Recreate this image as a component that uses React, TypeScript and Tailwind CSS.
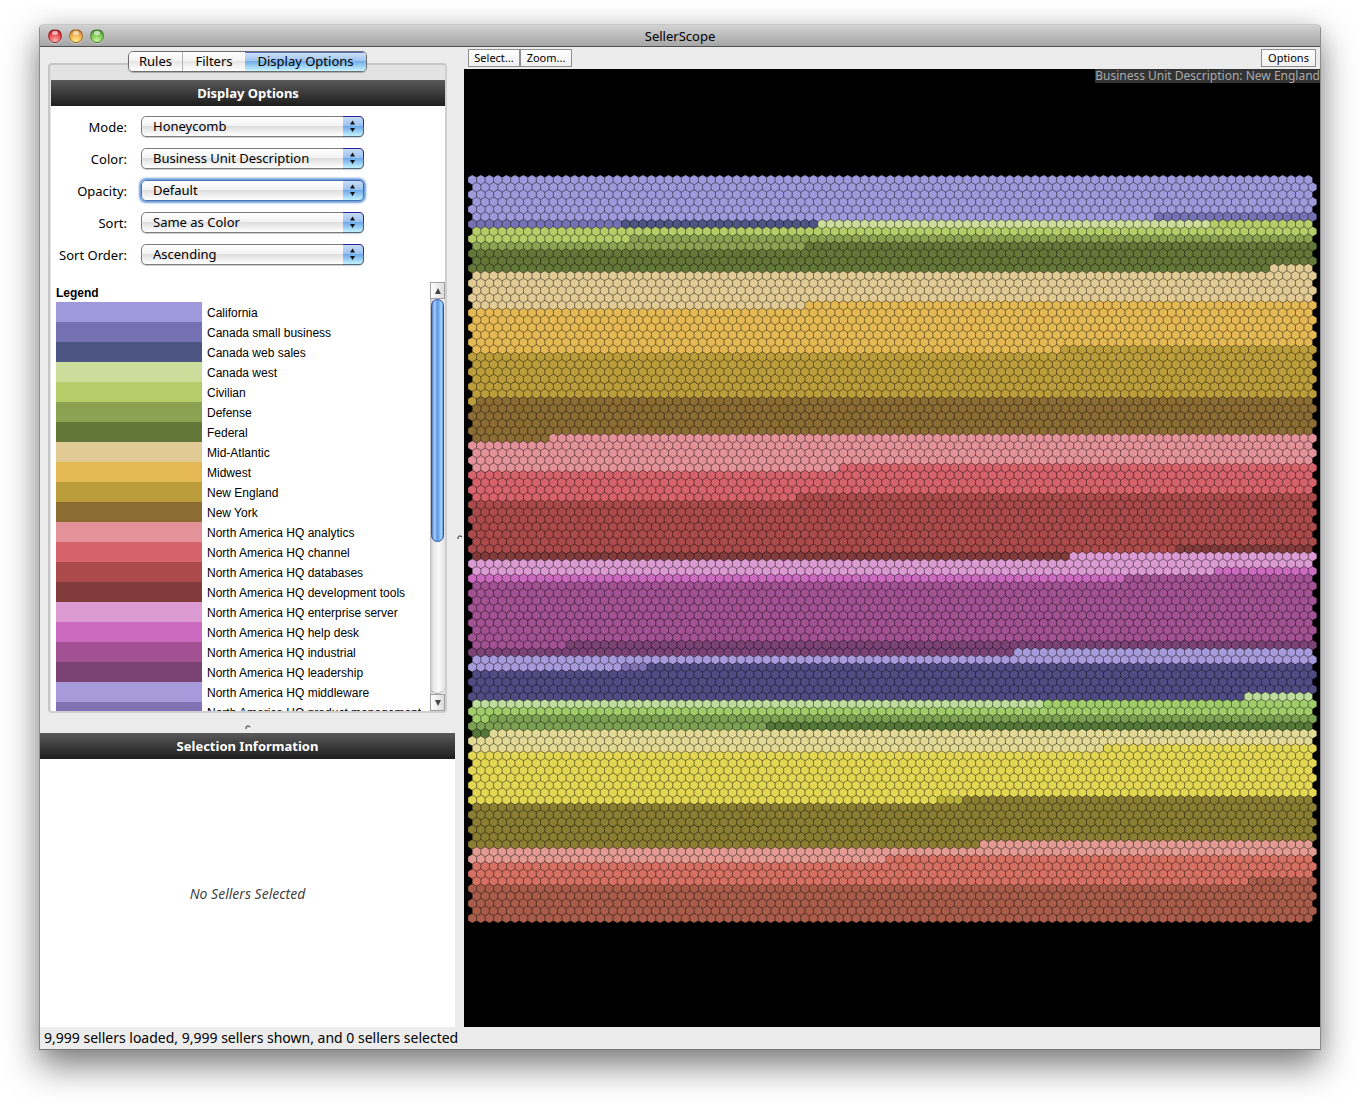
import { ReactNode } from "react";

const legend: [string, string][] = [
  ["California", "#9d99db"],
  ["Canada small business", "#7572b3"],
  ["Canada web sales", "#4d5583"],
  ["Canada west", "#cbdc9b"],
  ["Civilian", "#b4cd69"],
  ["Defense", "#8ba252"],
  ["Federal", "#637838"],
  ["Mid-Atlantic", "#e1ca94"],
  ["Midwest", "#e4b953"],
  ["New England", "#bc9d3b"],
  ["New York", "#8b6c33"],
  ["North America HQ analytics", "#e39299"],
  ["North America HQ channel", "#d6626b"],
  ["North America HQ databases", "#aa4a4a"],
  ["North America HQ development tools", "#823b3b"],
  ["North America HQ enterprise server", "#db9ad2"],
  ["North America HQ help desk", "#cb6abe"],
  ["North America HQ industrial", "#a25193"],
  ["North America HQ leadership", "#7b4274"],
  ["North America HQ middleware", "#a69adb"],
  ["North America HQ product management", "#7f72b3"],
];

/* Each band starts at [row, column] and runs to the start of the next. */
const bands: [number, number, string][] = [
  [0, 0, "#9d99db"],
  [5, 80, "#7572b3"],
  [6, 18, "#4d5583"],
  [6, 41, "#cbdc9b"],
  [6, 87, "#b4cd69"],
  [8, 19, "#8ba252"],
  [9, 39, "#637838"],
  [12, 94, "#e1ca94"],
  [17, 39, "#e4b953"],
  [23, 69, "#bc9d3b"],
  [30, 1, "#8b6c33"],
  [35, 9, "#e39299"],
  [39, 43, "#d6626b"],
  [43, 38, "#aa4a4a"],
  [50, 83, "#823b3b"],
  [51, 70, "#db9ad2"],
  [53, 87, "#cb6abe"],
  [54, 77, "#a25193"],
  [63, 11, "#7b4274"],
  [64, 64, "#a69adb"],
  [66, 18, "#7f72b3"],
  [66, 21, "#504c83"],
  [70, 91, "#bedc9b"],
  [71, 67, "#a0cd69"],
  [73, 2, "#7ba252"],
  [74, 35, "#547838"],
  [75, 2, "#e1d994"],
  [77, 74, "#e2d653"],
  [84, 55, "#bcb33b"],
  [84, 58, "#8b7e33"],
  [90, 60, "#e39a92"],
  [92, 49, "#d67062"],
  [95, 91, "#aa5c4a"],
];

const COLS = 99;
const CELLS = COLS * 101;
const PITCH_X = 8.53;
const PITCH_Y = 7.384;
const HALF = PITCH_X / 2;
const RADIUS = PITCH_X / Math.sqrt(3);

function hexagon(i: number) {
  const row = Math.floor(i / COLS);
  const x = 8.3 + (i % COLS) * PITCH_X + (row % 2) * HALF;
  const y = 110.8 + row * PITCH_Y;
  const s = RADIUS / 2;
  return `M${x.toFixed(2)} ${(y - RADIUS).toFixed(2)}l${HALF} ${s.toFixed(2)}v${RADIUS.toFixed(2)}l${-HALF} ${s.toFixed(2)}l${-HALF} ${(-s).toFixed(2)}v${(-RADIUS).toFixed(2)}z`;
}

const bandPaths = bands.map(([row, col, color], n) => {
  const start = row * COLS + col;
  const next = bands[n + 1];
  const end = next ? next[0] * COLS + next[1] : CELLS;
  let d = "";
  for (let i = start; i < end; i++) d += hexagon(i);
  return { color, d };
});

function Honeycomb() {
  return (
    <svg viewBox="0 0 856 958" className="block h-full w-full" role="img" aria-label="Sellers by business unit">
      {bandPaths.map((b) => (
        <path key={b.color} d={b.d} fill={b.color} stroke="#000" strokeOpacity="0.42" strokeWidth="0.6" />
      ))}
    </svg>
  );
}

function TrafficLight({ className, label }: { className: string; label: string }) {
  return (
    <button
      aria-label={label}
      className={`relative size-[14px] rounded-full border border-black/30 shadow-[0_1px_0_rgba(255,255,255,0.5)] ${className}`}
    >
      <span className="absolute top-px left-[3px] h-1 w-1.5 rounded-full bg-white/60" />
    </button>
  );
}

function PanelHeader({ children }: { children: ReactNode }) {
  return (
    <h2 className="h-[26px] shrink-0 bg-linear-to-b from-[#5a5a5a] to-[#1e1e1e] text-center text-[13px] leading-[26px] font-bold text-white">
      {children}
    </h2>
  );
}

function Field({ id, label, value, focused }: { id: string; label: string; value: string; focused?: boolean }) {
  return (
    <div className="flex h-8 items-start gap-3.5">
      <label htmlFor={id} className="w-[76px] text-right leading-[22px] whitespace-nowrap">
        {label}
      </label>
      <div
        className={
          focused
            ? "relative h-[21px] w-[223px] rounded-[5px] shadow-[0_0_2px_2px_#6f9edb]"
            : "relative h-[21px] w-[223px] rounded-[5px] shadow-[0_1px_1px_rgba(0,0,0,0.2)]"
        }
      >
        <select
          id={id}
          className={`block h-full w-full appearance-none rounded-[5px] border bg-[linear-gradient(#fff,#f3f3f3_45%,#dfdfdf_50%,#fff)] pr-6 pb-px pl-[11px] text-[13px] leading-[18px] text-black outline-none ${
            focused ? "border-[#4a76b8]" : "border-[#7c7c7c]"
          }`}
        >
          <option>{value}</option>
        </select>
        <svg
          viewBox="0 0 21 21"
          className="pointer-events-none absolute top-0 right-0 h-[21px] w-[21px]"
          aria-hidden="true"
        >
          <defs>
            <linearGradient id={`${id}-aqua`} x1="0" y1="0" x2="0" y2="1">
              <stop offset="0" stopColor="#c9def6" />
              <stop offset="0.45" stopColor="#9cc3f0" />
              <stop offset="0.5" stopColor="#6ea9e9" />
              <stop offset="1" stopColor="#c8f6ff" />
            </linearGradient>
          </defs>
          <path d="M0 0.5H16Q20.5 0.5 20.5 5V16Q20.5 20.5 16 20.5H0Z" fill={`url(#${id}-aqua)`} />
          <path d="M0 0.5H16Q20.5 0.5 20.5 5V10" fill="none" stroke={focused ? "#3a62b0" : "#26269a"} />
          <path d="M20.5 10V16Q20.5 20.5 16 20.5H0" fill="none" stroke={focused ? "#4a76b8" : "#49677f"} />
          <path d="M7 8.5L9.500 4.500L12 8.500ZM7 12L9.500 16L12 12Z" fill="#111" />
        </svg>
      </div>
    </div>
  );
}

function Grip() {
  return (
    <svg viewBox="0 0 6 5" className="h-[5px] w-[6px]" aria-hidden="true">
      <path d="M1 4Q1 1 3 1Q4.500 1 5 2.500" fill="none" stroke="#6a6a6a" strokeWidth="1.4" />
      <path d="M3 4L5 3" stroke="#fff" />
    </svg>
  );
}

function ScrollBar() {
  const arrow =
    "grid h-[17px] w-full place-items-center border border-[#a0a0a0] bg-linear-to-r from-[#fff] to-[#dcdcdc]";
  return (
    <div className="flex w-[15px] shrink-0 flex-col bg-[linear-gradient(90deg,#bcbcbc,#e6e6e6_20%,#fafafa_60%,#e2e2e2)]">
      <button aria-label="Scroll up" className={arrow}>
        <svg viewBox="0 0 8 6" className="h-1.5 w-2">
          <path d="M1 6L4 0L7 6Z" fill="#444" />
        </svg>
      </button>
      <div className="mx-px h-[243px] rounded-full border border-[#2d4fa8] bg-[linear-gradient(90deg,#4a7cc8,#a9c8ee_20%,#8ab8f0_35%,#5a97e8_50%,#7ab4f2_65%,#a4d8f8_85%,#5f93d8)]" />
      <div className="flex-1 rounded-b-full border-b border-[#aaa]" />
      <button aria-label="Scroll down" className={arrow}>
        <svg viewBox="0 0 8 6" className="h-1.5 w-2">
          <path d="M1 0L4 6L7 0Z" fill="#444" />
        </svg>
      </button>
    </div>
  );
}

const toolButton =
  "h-[18px] border border-[#8e8e8e] bg-linear-to-b from-white to-[#f0f0f0] px-[5px] text-[11px] leading-4 text-black";

export default function App() {
  return (
    <div className="flex h-screen min-h-[800px] bg-white pt-6 pr-[39px] pb-[54px] pl-[39px] font-['Noto_Sans',sans-serif] text-[13px] text-black">
      <main className="flex min-w-0 flex-1 flex-col overflow-hidden rounded-t-[5px] border border-t-[#c8c8c8] border-r-[#8c8c8c] border-b-[#777] border-l-[#8c8c8c] bg-[#ececec] shadow-[0_16px_34px_rgba(0,0,0,0.5),0_0_20px_rgba(0,0,0,0.08)]">
        <header className="flex h-[22px] shrink-0 items-center border-b border-[#515151] bg-linear-to-b from-[#d2d2d2] to-[#a6a6a6] px-2">
          <div className="flex flex-1 gap-[7px]">
            <TrafficLight label="Close" className="bg-[radial-gradient(circle_at_50%_90%,#ffb8b8,#e63c42_60%,#a01a20)]" />
            <TrafficLight label="Minimize" className="bg-[radial-gradient(circle_at_50%_90%,#fff08a,#f0a848_60%,#b0641c)]" />
            <TrafficLight label="Zoom" className="bg-[radial-gradient(circle_at_50%_90%,#c8f59a,#74c04c_60%,#37791f)]" />
          </div>
          <h1 className="text-[13px] leading-5">SellerScope</h1>
          <div className="flex-1" />
        </header>

        <div className="flex min-h-0 flex-1">
          <aside className="flex w-[415px] shrink-0 flex-col">
            <section className="flex min-h-0 flex-1 flex-col px-2 pt-1">
              <div role="tablist" className="relative z-10 flex h-[21px] self-center overflow-hidden rounded-[5px] border border-[#6e6e6e] leading-[19px] shadow-[0_1px_1px_rgba(0,0,0,0.25)]">
                <button role="tab" aria-selected="false" className="w-[54px] border-r border-[#b4b4b4] bg-[linear-gradient(#fff,#f4f4f4_45%,#e6e6e6_50%,#fff)]">
                  Rules
                </button>
                <button role="tab" aria-selected="false" className="w-[62px] bg-[linear-gradient(#fff,#f4f4f4_45%,#e6e6e6_50%,#fff)]">
                  Filters
                </button>
                <button role="tab" aria-selected="true" className="w-[121px] bg-[linear-gradient(#d4e4f7,#9fc5f1_45%,#74ade9_50%,#c8f6ff)] shadow-[inset_0_1px_0_#5c6fc0]">
                  Display Options
                </button>
              </div>

              <div className="-mt-[9px] flex min-h-0 flex-1 flex-col rounded-[4px] border-2 border-[#c6c6c6] border-r-[#cfcfcf] border-b-[#cfcfcf] bg-[#e3e3e3] pt-[15px] pl-px">
                <PanelHeader>Display Options</PanelHeader>
                <div className="flex min-h-0 flex-1 flex-col bg-white">
                  <form className="pt-2.5">
                    <Field id="mode" label="Mode:" value="Honeycomb" />
                    <Field id="color" label="Color:" value="Business Unit Description" />
                    <Field id="opacity" label="Opacity:" value="Default" focused />
                    <Field id="sort" label="Sort:" value="Same as Color" />
                    <Field id="order" label="Sort Order:" value="Ascending" />
                  </form>
                  <div className="mt-1.5 flex min-h-0 flex-1 pl-[5px]">
                    <div className="min-w-0 flex-1 [scrollbar-width:none] overflow-y-auto font-['Liberation_Sans',sans-serif] text-[12px] leading-[22px] whitespace-nowrap">
                      <h3 className="h-5 font-bold">Legend</h3>
                      <ul>
                        {legend.map(([name, color]) => (
                          <li key={name} className="flex h-5 gap-[5px]">
                            <span className="w-[146px] shrink-0" style={{ backgroundColor: color }} />
                            {name}
                          </li>
                        ))}
                      </ul>
                    </div>
                    <ScrollBar />
                  </div>
                </div>
              </div>
            </section>

            <div className="grid h-5 shrink-0 place-items-center pt-2">
              <Grip />
            </div>

            <section className="flex h-[294px] shrink-0 flex-col">
              <PanelHeader>Selection Information</PanelHeader>
              <p className="grid flex-1 place-items-center bg-white text-[14px] text-[#444] italic">No Sellers Selected</p>
            </section>
          </aside>

          <div className="grid w-[9px] shrink-0 place-items-center">
            <Grip />
          </div>

          <section className="flex min-w-0 flex-1 flex-col">
            <div className="flex h-[22px] shrink-0 items-center px-1">
              <button className={`${toolButton} w-[52px]`}>Select...</button>
              <button className={`${toolButton} w-[52px]`}>Zoom...</button>
              <button className={`${toolButton} ml-auto w-[55px]`}>Options</button>
            </div>
            <div className="relative min-h-0 flex-1 bg-black">
              <Honeycomb />
              <p className="absolute top-0 right-0 bg-[#333] text-[12px] leading-[14px] whitespace-nowrap text-[#aaa]">
                Business Unit Description: New England
              </p>
            </div>
          </section>
        </div>

        <footer className="h-[22px] shrink-0 px-1 text-[14px] leading-[22px]">
          9,999 sellers loaded, 9,999 sellers shown, and 0 sellers selected
        </footer>
      </main>
    </div>
  );
}
